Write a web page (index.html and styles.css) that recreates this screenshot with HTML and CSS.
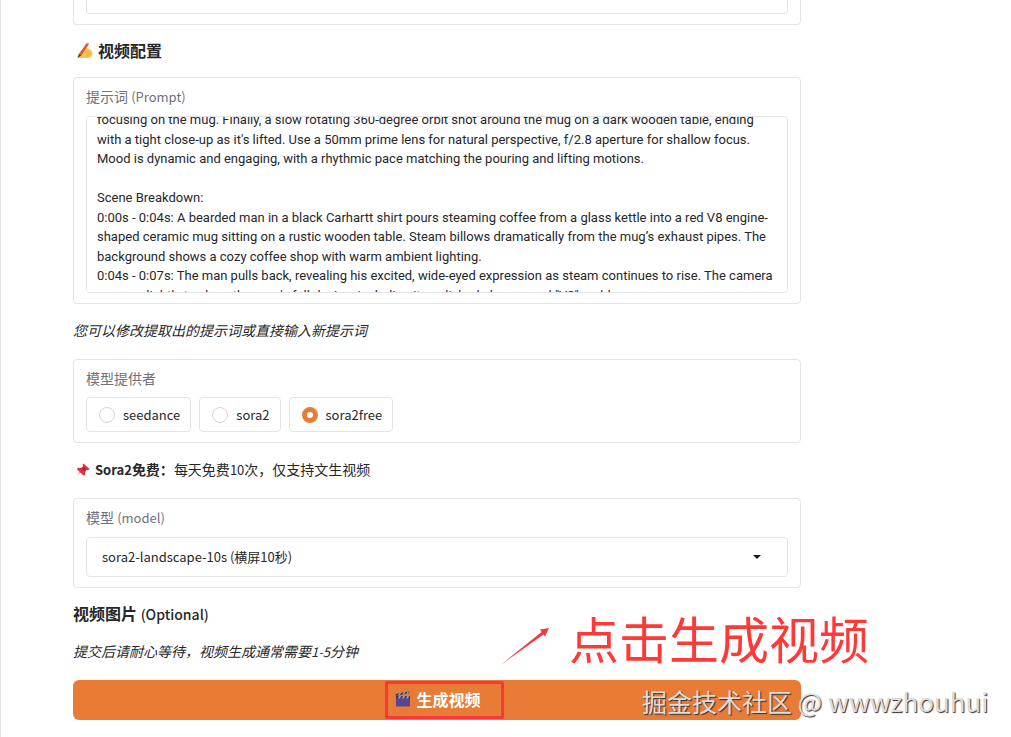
FILE: index.html
```html
<!DOCTYPE html>
<html lang="zh-CN">
<head>
<meta charset="utf-8">
<title>视频配置</title>
<meta name="viewport" content="width=device-width, initial-scale=1">
<link rel="stylesheet" href="styles.css">
</head>
<body>
<main class="page">
  <section class="card card-tail"><div class="tail-box"></div></section>

  <h3 class="heading heading-icon">
    <svg class="emoji" viewBox="0 0 17 17" aria-hidden="true">
      <path d="M1.500 15.500 C2 12.500 3.500 10 5.500 8.500 C7.500 6.500 9.500 5.800 11 6.200 C13.500 6.500 15.500 8 16.200 10 C17 12.500 16 15 13.500 15.800 C11 16.300 5 16 1.500 15.500 Z" fill="#fbc350"/>
      <path d="M9.500 10 L13 9.500 M10 12 L14.500 11.700 M9.500 14 L13.500 13.800" stroke="#e8a233" stroke-width=".7" fill="none"/>
      <path d="M10.500 1.200 L12.800 2.400 L5.500 13.200 L3 12 Z" fill="#df5a3c"/>
      <path d="M10.500 1.200 L11.600 .2 L13.400 1.200 L12.800 2.400 Z" fill="#f2a18d"/>
      <path d="M3 12 L5.500 13.200 L1.500 16.300 Z" fill="#4a4038"/>
    </svg>
    视频配置
  </h3>

  <section class="card">
    <label class="label" for="prompt">提示词 <span class="latin">(Prompt)</span></label>
    <textarea class="prompt" id="prompt" spellcheck="false">focusing on the mug. Finally, a slow rotating 360-degree orbit shot around the mug on a dark wooden table, ending with a tight close-up as it's lifted. Use a 50mm prime lens for natural perspective, f/2.8 aperture for shallow focus. Mood is dynamic and engaging, with a rhythmic pace matching the pouring and lifting motions.

Scene Breakdown:
0:00s - 0:04s: A bearded man in a black Carhartt shirt pours steaming coffee from a glass kettle into a red V8 engine-shaped ceramic mug sitting on a rustic wooden table. Steam billows dramatically from the mug’s exhaust pipes. The background shows a cozy coffee shop with warm ambient lighting.
0:04s - 0:07s: The man pulls back, revealing his excited, wide-eyed expression as steam continues to rise. The camera zooms slightly to show the mug's full design, including its polished chrome and "V8" emblem.</textarea>
  </section>

  <p class="note"><em>您可以修改提取出的提示词或直接输入新提示词</em></p>

  <fieldset class="card">
    <legend class="label">模型提供者</legend>
    <div class="options">
      <label class="option"><input class="radio" type="radio" name="provider"><span>seedance</span></label>
      <label class="option"><input class="radio" type="radio" name="provider"><span>sora2</span></label>
      <label class="option"><input class="radio" type="radio" name="provider" checked><span>sora2free</span></label>
    </div>
  </fieldset>

  <p class="note note-icon">
    <svg class="pin" viewBox="0 0 14 14" aria-hidden="true">
      <path d="M5.500 9 L1 12.500 L4.500 7.500 Z" fill="#9aa3ab"/>
      <path d="M7.500 .5 L13.500 6 L12 7.200 L10.500 6.800 L9 8.800 L9.300 11.800 L7.800 12.800 L.8 6.300 L2 4.800 L5.300 5 L7.300 3.300 L6.500 1.800 Z" fill="#dc3442"/>
      <path d="M5.300 5 L7.300 3.300 L10.500 6.800 L9 8.800 Z" fill="#b92537"/>
    </svg>
    <span><strong><span class="latin">Sora2</span>免费：</strong>每天免费<span class="latin">10</span>次，仅支持文生视频</span>
  </p>

  <section class="card">
    <label class="label" for="model">模型 <span class="latin">(model)</span></label>
    <div class="select-wrap">
      <select class="select" id="model"><option>sora2-landscape-10s (横屏10秒)</option></select>
      <svg class="caret" viewBox="0 0 8 4" aria-hidden="true"><path d="M0 0H8L4 4Z" fill="#18181b"/></svg>
    </div>
  </section>

  <h3 class="heading">视频图片 <span class="heading-latin">(Optional)</span></h3>

  <p class="note"><em>提交后请耐心等待，视频生成通常需要<span class="latin">1-5</span>分钟</em></p>

  <div class="action">
    <button class="submit" type="button">
      <svg class="clapper" viewBox="0 0 16 16" aria-hidden="true">
        <rect x="1" y="6.500" width="14" height="9" rx=".8" fill="#5b4390"/>
        <rect x="1" y="5" width="14" height="2.500" fill="#3f3a58"/>
        <path d="M1 5 L.5 3 L13.800 .2 L14.300 2.300 Z" fill="#3f3a58"/>
        <path d="M3 4.500L4.300 2.200L6.200 1.800L5 4.100Z M7.300 3.700L8.600 1.300L10.400 .9L9.300 3.300Z M11.300 2.900L12.500 .5L13.800 .2L13.200 2.500Z M3 7.500L4 5H6L5 7.500Z M7 7.500L8 5H10L9 7.500Z M11 7.500L12 5H14L13 7.500Z" fill="#a99db4"/>
      </svg>
      <span>生成视频</span>
    </button>
    <span class="marker"></span>
    <svg class="arrow" viewBox="0 0 50 40" aria-hidden="true"><path d="M0 38.500 L41.500 5 L40 2.500 L49 1 L45 9.500 L43.500 7.500 Z" fill="#f03c3c"/></svg>
    <span class="callout">点击生成视频</span>
    <span class="watermark">掘金技术社区 <span class="watermark-name">@ wwwzhouhui</span></span>
  </div>
</main>
<script src="script.js"></script>
</body>
</html>
```
FILE: script.js
```js
// Open the prompt box slightly scrolled.
document.getElementById("prompt").scrollTop = 17;
```
FILE: styles.css
```css
* { box-sizing: border-box; }

body {
  margin: 0;
  background: #fff;
  color: #27272a;
  font-family: "Noto Sans CJK SC", "Noto Sans", sans-serif;
  font-size: 14px;
}

.page {
  display: flex;
  flex-direction: column;
  gap: 16px;
  min-height: 100vh;
  padding: 0 210px 18px 72px;
  border-left: 1px solid #e4e4e7;
}

.card {
  margin: 0;
  min-width: 0;
  padding: 8px 12px 10px;
  border: 1px solid #e4e4e7;
  border-radius: 4px;
}

.card-tail {
  padding-top: 0;
  border-top: 0;
  border-radius: 0 0 4px 4px;
}

.tail-box {
  height: 14px;
  border: 1px solid #e4e4e7;
  border-top: 0;
  border-radius: 0 0 4px 4px;
}

.label {
  display: block;
  float: left;
  width: 100%;
  margin-bottom: 9px;
  padding: 0;
  color: #71717a;
  line-height: 20px;
}

.latin { font-size: 13px; }

.heading {
  margin: 0;
  padding-bottom: 2px;
  font-size: 16px;
  font-weight: 700;
  line-height: 18px;
}

.heading-latin {
  font-size: 14px;
  font-weight: 500;
}

.heading-icon,
.note-icon {
  display: flex;
  align-items: center;
  gap: 5px;
  padding-left: 3px;
}

.emoji { width: 17px; height: 17px; }
.pin { width: 14px; height: 14px; }

.note {
  margin: 0;
  padding-bottom: 2px;
  line-height: 21px;
}

.prompt {
  display: block;
  width: 100%;
  height: 177px;
  padding: 10px;
  border: 1px solid #e4e4e7;
  border-radius: 4px;
  outline: 0;
  resize: none;
  overflow-y: scroll;
  scrollbar-width: none;
  background: #fff;
  color: #27272a;
  font-family: Roboto, "Noto Sans CJK SC", sans-serif;
  font-size: 13px;
  line-height: 1.5;
}

.options {
  display: flex;
  flex-wrap: wrap;
  gap: 8px;
  clear: both;
}

.option {
  display: flex;
  align-items: center;
  gap: 8px;
  height: 35px;
  padding: 0 10px 0 12px;
  border: 1px solid #e4e4e7;
  border-radius: 4px;
  font-size: 13px;
  line-height: 20px;
}

.radio {
  appearance: none;
  width: 16px;
  height: 16px;
  margin: 0;
  border: 1px solid #d4d4d8;
  border-radius: 50%;
  background: #fff;
}

.radio:checked { border: 5px solid #e87b35; }

.select-wrap {
  display: grid;
  align-items: center;
  clear: both;
}

.select {
  grid-area: 1 / 1;
  appearance: none;
  width: 100%;
  height: 40px;
  padding: 0 48px 2px 15px;
  border: 1px solid #e4e4e7;
  border-radius: 4px;
  background: #fff;
  color: #27272a;
  font-family: inherit;
  font-size: 13px;
}

.caret {
  grid-area: 1 / 1;
  justify-self: end;
  width: 8px;
  height: 4px;
  margin-right: 27px;
  pointer-events: none;
}

.action { position: relative; }

.submit {
  display: flex;
  align-items: center;
  justify-content: center;
  gap: 5px;
  width: 100%;
  height: 40px;
  padding: 0 0 2px 2px;
  border: 0;
  border-radius: 6px;
  background: #e87b35;
  color: #fff;
  font-family: inherit;
  font-size: 16px;
  font-weight: 700;
}

.clapper { width: 16px; height: 16px; }

.marker {
  position: absolute;
  top: 1px;
  left: 312px;
  width: 119px;
  height: 38px;
  border: 3px solid #fa3838;
  border-radius: 2px;
}

.arrow {
  position: absolute;
  top: -53px;
  left: 427px;
  width: 50px;
  height: 40px;
}

.callout {
  position: absolute;
  top: -71px;
  left: 496px;
  color: #ff3838;
  font-size: 50px;
  line-height: 56px;
  white-space: nowrap;
}

.watermark {
  position: absolute;
  top: 6px;
  left: 569px;
  color: #ddd;
  font-size: 25px;
  line-height: 30px;
  text-shadow: 1px 1px 1px #333;
  white-space: nowrap;
}

.watermark-name { font-size: 26px; }
```
